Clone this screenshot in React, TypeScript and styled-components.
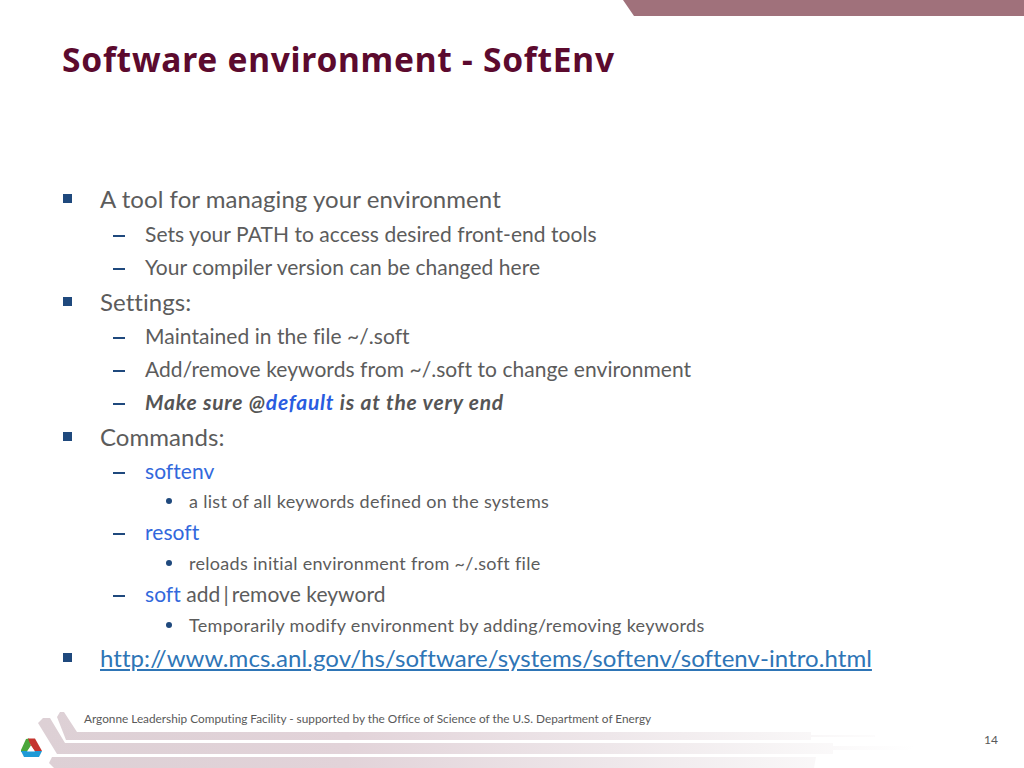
import React from "react";
import styled, { createGlobalStyle } from "styled-components";

const Global = createGlobalStyle`
  html, body { margin: 0; padding: 0; background: #fff; }
  body { font-family: "Lato", "Open Sans", sans-serif; font-variant-ligatures: none; }
`;

const Slide = styled.div`
  width: 1024px;
  height: 768px;
  position: relative;
  overflow: hidden;
  background: #fff;
  display: flex;
  flex-direction: column;
`;

const TopBand = styled.svg`
  display: block;
  flex: none;
  width: 1024px;
  height: 16px;
`;

const Title = styled.h1`
  margin: 0;
  padding: 20px 0 0 62px;
  height: 164px;
  box-sizing: border-box;
  font-family: "Noto Sans", sans-serif;
  font-weight: 700;
  font-size: 33.5px;
  line-height: 46px;
  letter-spacing: 0.75px;
  color: #5c0a2e;
  flex: none;
`;

const List = styled.ul`
  list-style: none;
  margin: 0;
  padding: 0;
  flex: none;
`;

const rowMetrics = {
  1: { size: 24, pad: 100, mark: 63, track: 0.06 },
  2: { size: 21, pad: 145, mark: 113, track: 0.05 },
  3: { size: 18, pad: 189, mark: 166, track: 0.3 },
} as const;

const Row = styled.li<{ $level: 1 | 2 | 3; $h: number }>`
  display: flex;
  align-items: center;
  height: ${(p) => p.$h}px;
  padding-left: ${(p) => rowMetrics[p.$level].mark}px;
  font-size: ${(p) => rowMetrics[p.$level].size}px;
  letter-spacing: ${(p) => rowMetrics[p.$level].track}px;
  color: #5c5c5c;
  white-space: pre;
`;

const Marker = styled.span<{ $level: 1 | 2 | 3 }>`
  flex: none;
  width: ${(p) => rowMetrics[p.$level].pad - rowMetrics[p.$level].mark}px;
  display: flex;
  align-items: center;
`;

const Square = styled.i`
  display: block;
  width: 9px;
  height: 9px;
  background: #1f497d;
`;

const Dash = styled.i`
  display: block;
  width: 12px;
  height: 2px;
  margin-top: 5px;
  background: #1f497d;
`;

const Dot = styled.i`
  display: block;
  width: 6px;
  height: 6px;
  border-radius: 50%;
  background: #1f497d;
`;

const Command = styled.span`
  color: #3268dc;
`;

const Pipe = styled.span`
  margin: 0 3px;
`;

const Emphasis = styled.span`
  font-weight: 700;
  font-style: italic;
  letter-spacing: 0.8px;
  color: #555555;
`;

const EmphasisBlue = styled.span`
  color: #2a5ce0;
`;

const Link = styled.a`
  color: #2e75b6;
  text-decoration: underline;
`;

const Footer = styled.footer`
  position: absolute;
  left: 0;
  right: 0;
  bottom: 0;
  height: 60px;
`;

const FooterArt = styled.svg`
  position: absolute;
  left: 0;
  top: 0;
  width: 1024px;
  height: 60px;
`;

const FooterText = styled.div`
  position: absolute;
  left: 84px;
  top: 3px;
  font-size: 11.8px;
  line-height: 16px;
  color: #595959;
`;

const PageNumber = styled.div`
  position: absolute;
  right: 26px;
  top: 24px;
  font-size: 12px;
  line-height: 16px;
  color: #595959;
`;

const FooterGraphic = () => (
  <FooterArt viewBox="0 708 1024 60">
    <defs>
      <linearGradient id="fade" gradientUnits="userSpaceOnUse" x1="40" x2="915" y1="0" y2="0">
        <stop offset="0" stopColor="#ddd0d5" />
        <stop offset="0.35" stopColor="#e2d3d9" />
        <stop offset="0.65" stopColor="#eee7ea" />
        <stop offset="0.82" stopColor="#f6f3f4" />
        <stop offset="1" stopColor="#ffffff" />
      </linearGradient>
    </defs>
    <path d="M57 717 L60 712 L64 712 L77 732 L811 732 L811 735 L875 735 L875 737 L811 737 L811 740 L66 740 Z" fill="url(#fade)" />
    <path d="M38 723 L43 718 L50 718 L65 743 L833 743 L833 746 L914 746 L914 750 L833 750 L833 754 L57 754 Z" fill="url(#fade)" />
    <path d="M49 763 L52 757 L816 757 L814 768 L54 768 Z" fill="url(#fade)" />
    <path d="M26 739 L29 738.5 L31 746 L27 752 L21 752 L21 750 Z" fill="#4aa63c" />
    <path d="M28 738.5 L35 738.5 L42 751 L35 752 L31 746 Z" fill="#c4342e" />
    <path d="M21 751 L42 751 L39 757 L24 757 Z" fill="#1f9ad6" />
    <path d="M31 745.5 L35 751.5 L27 751.5 Z" fill="#fff" />
  </FooterArt>
);

export default function App() {
  return (
    <Slide>
      <Global />
      <TopBand viewBox="0 0 1024 16">
        <polygon points="623,0 1024,0 1024,16 634,16" fill="#a0717b" />
      </TopBand>
      <Title>Software environment - SoftEnv</Title>
      <List>
        <Row $level={1} $h={36}><Marker $level={1}><Square /></Marker>A tool for managing your environment</Row>
        <Row $level={2} $h={34}><Marker $level={2}><Dash /></Marker>Sets your PATH to access desired front-end tools</Row>
        <Row $level={2} $h={33}><Marker $level={2}><Dash /></Marker>Your compiler version can be changed here</Row>
        <Row $level={1} $h={37}><Marker $level={1}><Square /></Marker>Settings:</Row>
        <Row $level={2} $h={31}><Marker $level={2}><Dash /></Marker>Maintained in the file ~/.soft</Row>
        <Row $level={2} $h={34}><Marker $level={2}><Dash /></Marker>Add/remove keywords from ~/.soft to change environment</Row>
        <Row $level={2} $h={33}><Marker $level={2}><Dash /></Marker><Emphasis>Make sure @<EmphasisBlue>default</EmphasisBlue> is at the very end</Emphasis></Row>
        <Row $level={1} $h={36}><Marker $level={1}><Square /></Marker>Commands:</Row>
        <Row $level={2} $h={33}><Marker $level={2}><Dash /></Marker><Command>softenv</Command></Row>
        <Row $level={3} $h={28}><Marker $level={3}><Dot /></Marker>a list of all keywords defined on the systems</Row>
        <Row $level={2} $h={33}><Marker $level={2}><Dash /></Marker><Command>resoft</Command></Row>
        <Row $level={3} $h={29}><Marker $level={3}><Dot /></Marker>reloads initial environment from ~/.soft file</Row>
        <Row $level={2} $h={33}><Marker $level={2}><Dash /></Marker><Command>soft</Command> add<Pipe>|</Pipe>remove keyword</Row>
        <Row $level={3} $h={29}><Marker $level={3}><Dot /></Marker>Temporarily modify environment by adding/removing keywords</Row>
        <Row $level={1} $h={36}><Marker $level={1}><Square /></Marker><Link>http://www.mcs.anl.gov/hs/software/systems/softenv/softenv-intro.html</Link></Row>
      </List>
      <Footer>
        <FooterGraphic />
        <FooterText>Argonne Leadership Computing Facility - supported by the Office of Science of the U.S. Department of Energy</FooterText>
        <PageNumber>14</PageNumber>
      </Footer>
    </Slide>
  );
}
